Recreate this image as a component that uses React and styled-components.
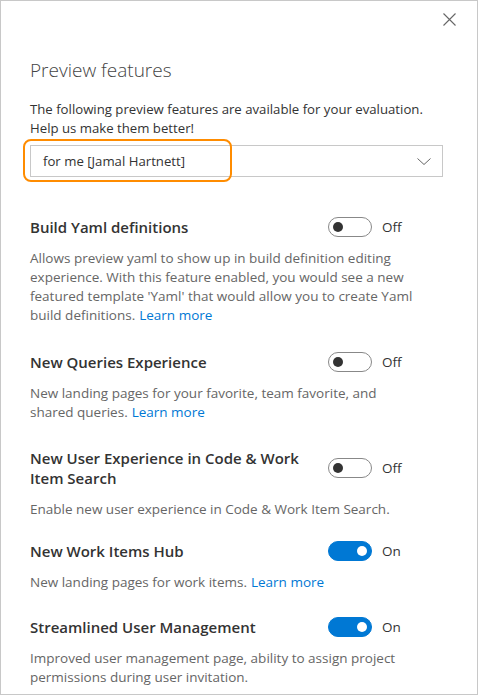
import styled, { createGlobalStyle } from 'styled-components';

const GlobalStyle = createGlobalStyle`
  html, body {
    margin: 0;
    padding: 0;
    background: #fff;
  }
  body {
    font-family: "Open Sans", "Noto Sans", sans-serif;
    color: #333;
  }
`;

const features = [
  {
    title: 'Build Yaml definitions',
    on: false,
    text: "Allows preview yaml to show up in build definition editing experience. With this feature enabled, you would see a new featured template 'Yaml' that would allow you to create Yaml build definitions.",
    link: true,
    after: 27,
  },
  {
    title: 'New Queries Experience',
    on: false,
    text: 'New landing pages for your favorite, team favorite, and shared queries.',
    link: true,
    after: 26,
  },
  {
    title: 'New User Experience in Code & Work Item Search',
    on: false,
    text: 'Enable new user experience in Code & Work Item Search.',
    link: false,
    after: 22,
  },
  {
    title: 'New Work Items Hub',
    on: true,
    text: 'New landing pages for work items.',
    link: true,
    after: 25,
  },
  {
    title: 'Streamlined User Management',
    on: true,
    text: 'Improved user management page, ability to assign project permissions during user invitation.',
    link: false,
    after: 0,
  },
];

const App = () => {
  return (
    <>
      <GlobalStyle />
      <Panel>
        <TopBar>
          <CloseButton aria-label="Close">
            <svg width="13" height="13" viewBox="0 0 13 13">
              <path d="M0.5 0.5 L12.5 12.5 M12.5 0.5 L0.5 12.5" stroke="#666" strokeWidth="1.1" />
            </svg>
          </CloseButton>
        </TopBar>
        <Title>Preview features</Title>
        <Intro>
          The following preview features are available for your evaluation.
          <br />
          Help us make them better!
        </Intro>
        <SelectWrap>
          <Highlight />
          <Select>
            <span>for me [Jamal Hartnett]</span>
            <svg width="14" height="7" viewBox="0 0 14 7">
              <path d="M0.5 0.5 L7 6.5 L13.5 0.5" fill="none" stroke="#666" strokeWidth="1" />
            </svg>
          </Select>
        </SelectWrap>
        <List>
          {features.map((f) => (
            <Feature key={f.title} $after={f.after}>
              <FeatureHead>
                <FeatureTitle>{f.title}</FeatureTitle>
                <ToggleRow>
                  <Toggle $on={f.on}>
                    <Knob $on={f.on} />
                  </Toggle>
                  <ToggleLabel>{f.on ? 'On' : 'Off'}</ToggleLabel>
                </ToggleRow>
              </FeatureHead>
              <FeatureText>
                {f.text}
                {f.link && <Link href="#">Learn more</Link>}
              </FeatureText>
            </Feature>
          ))}
        </List>
      </Panel>
    </>
  );
};

export default App;

const Panel = styled.div`
  box-sizing: border-box;
  width: 478px;
  height: 695px;
  border: 1px solid #c8c8c8;
  padding: 0 34px 0 29px;
  overflow: hidden;
  position: relative;
`;

const TopBar = styled.div`
  display: flex;
  justify-content: flex-end;
  height: 40px;
  margin-right: -13px;
  padding-top: 12px;
  box-sizing: border-box;
`;

const CloseButton = styled.button`
  border: none;
  background: none;
  padding: 0;
  width: 14px;
  height: 14px;
  cursor: pointer;
`;

const Title = styled.h1`
  margin: 15px 0 0;
  font-size: 19px;
  font-weight: 300;
  color: #444;
  line-height: 28px;
`;

const Intro = styled.p`
  margin: 16px 0 0;
  font-size: 13.2px;
  line-height: 19px;
  color: #333;
`;

const SelectWrap = styled.div`
  position: relative;
  margin-top: 7px;
`;

const Highlight = styled.div`
  position: absolute;
  left: -7px;
  top: -6px;
  width: 209px;
  height: 43px;
  box-sizing: border-box;
  border: 2px solid #ff8c00;
  border-radius: 8px;
  pointer-events: none;
`;

const Select = styled.div`
  display: flex;
  align-items: center;
  justify-content: space-between;
  box-sizing: border-box;
  height: 32px;
  border: 1px solid #c8c8c8;
  padding: 0 11px 0 12px;
  font-size: 13.2px;
  color: #333;
`;

const List = styled.div`
  display: flex;
  flex-direction: column;
  margin-top: 40px;
`;

const Feature = styled.div`
  display: flex;
  flex-direction: column;
  gap: 12px;
  margin-bottom: ${(p) => p.$after}px;
`;

const FeatureHead = styled.div`
  display: flex;
  align-items: center;
`;

const FeatureTitle = styled.div`
  width: 282px;
  font-size: 15px;
  font-weight: 600;
  line-height: 20px;
  color: #333;
`;

const ToggleRow = styled.div`
  display: flex;
  align-items: center;
  margin-left: 16px;
  gap: 10px;
`;

const Toggle = styled.div`
  box-sizing: border-box;
  width: 44px;
  height: 20px;
  border-radius: 10px;
  border: 1px solid ${(p) => (p.$on ? '#0078d4' : '#888')};
  background: ${(p) => (p.$on ? '#0078d4' : '#fff')};
  display: flex;
  align-items: center;
  justify-content: ${(p) => (p.$on ? 'flex-end' : 'flex-start')};
  padding: 0 4px;
`;

const Knob = styled.div`
  width: 10px;
  height: 10px;
  border-radius: 50%;
  background: ${(p) => (p.$on ? '#fff' : '#333')};
`;

const ToggleLabel = styled.span`
  font-size: 13.5px;
  color: #333;
`;

const FeatureText = styled.p`
  margin: 0;
  font-size: 13.5px;
  line-height: 19px;
  color: #666;
  width: 390px;
`;

const Link = styled.a`
  margin-left: 4px;
  color: #0078d4;
  text-decoration: none;
`;
